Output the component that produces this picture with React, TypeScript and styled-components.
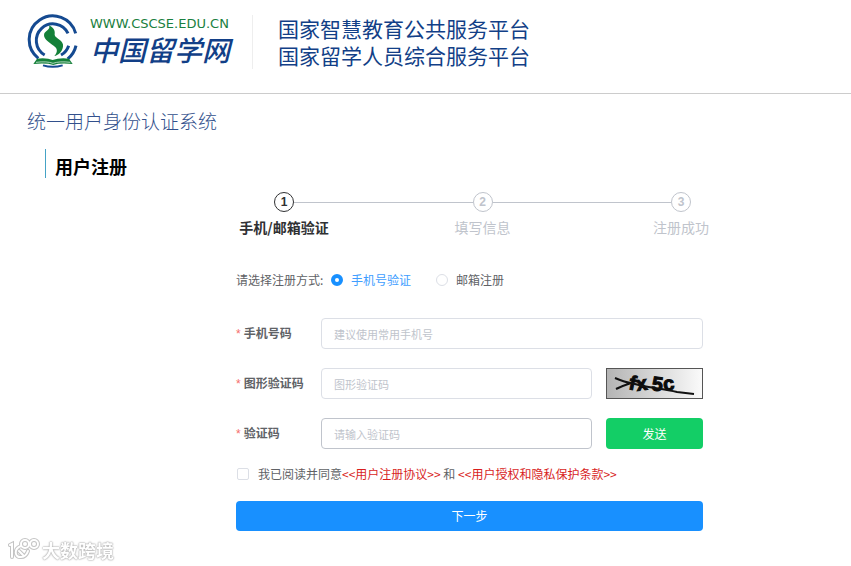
import React, { useState } from "react";
import styled, { createGlobalStyle } from "styled-components";

const GlobalStyle = createGlobalStyle`
  * { box-sizing: border-box; }
  body {
    margin: 0;
    background: #fff;
    color: #606266;
    font-family: "Noto Sans CJK SC", sans-serif;
    font-size: 12px;
    line-height: 20px;
  }
`;

const Header = styled.header`
  display: flex;
  align-items: flex-start;
  padding: 13px 27px 24px;
  border-bottom: 1px solid #ccc;
`;

const Brand = styled.a`
  display: flex;
  gap: 10px;
  color: #123f87;
  text-decoration: none;
`;

const BrandText = styled.span`
  display: flex;
  flex-direction: column;
  padding-top: 3px;
`;

const Domain = styled.span`
  color: #1a8040;
  font: 13px/16px "DejaVu Sans", sans-serif;
`;

const BrandName = styled.span`
  font-size: 28px;
  font-style: italic;
  font-weight: 500;
  line-height: 34px;
`;

const Platforms = styled.div`
  margin: 2px 0 0 22px;
  padding-left: 25px;
  border-left: 1px solid #eee;
  color: #123f87;
  font-size: 21px;
  line-height: 27px;
`;

const SystemName = styled.h1`
  margin: 15px 27px 0;
  color: #32508c;
  font-size: 19px;
  font-weight: 300;
  line-height: 24px;
`;

const PageTitle = styled.h2`
  margin: 16px 45px 0;
  padding: 6px 0 1px 9px;
  border-left: 1px solid #45a3c6;
  color: #000;
  font-size: 18px;
  font-weight: 700;
  line-height: 22px;
`;

const Main = styled.main`
  padding: 14px 122px 30px 236px;
`;

const Steps = styled.ol`
  display: grid;
  grid-template-columns: 96px 1fr 96px 1fr 96px;
  margin: 0;
  padding: 0;
  list-style: none;
`;

const StepItem = styled.li<{ $active?: boolean }>`
  display: flex;
  flex-direction: column;
  align-items: center;
  gap: 5px;
  color: ${(p) => (p.$active ? "#303133" : "#c0c4cc")};
  font-size: 14px;
  font-weight: ${(p) => (p.$active ? 700 : 400)};
  white-space: nowrap;
`;

const StepNumber = styled.span`
  width: 20px;
  height: 20px;
  border: 1px solid currentColor;
  border-radius: 50%;
  font: bold 12px/18px "Liberation Sans", sans-serif;
  text-align: center;
`;

const StepLine = styled.li`
  height: 1px;
  margin: 10px -38px 0;
  background: #c0c4cc;
`;

const Form = styled.form`
  display: flex;
  flex-direction: column;
  margin: 33px 26px 0 0;
`;

const MethodRow = styled.fieldset`
  display: flex;
  align-items: center;
  margin: 0 0 28px;
  padding: 0;
  border: 0;
`;

const MethodCaption = styled.span`
  width: 95px;
`;

const RadioLabel = styled.label<{ $checked: boolean }>`
  display: flex;
  align-items: center;
  gap: 8px;
  margin-right: 25px;
  color: ${(p) => (p.$checked ? "#409eff" : "#606266")};
`;

const Radio = styled.input`
  appearance: none;
  width: 12px;
  height: 12px;
  margin: 0;
  border: 1px solid #dcdfe6;
  border-radius: 50%;
  background: #fff;
  &:checked { border: 4px solid #1890ff; }
`;

const Row = styled.div`
  display: flex;
  align-items: center;
  margin-bottom: 19px;
`;

const FieldLabel = styled.label`
  width: 85px;
  flex: none;
  font-weight: 700;
  &::before {
    content: "*";
    margin-right: 3px;
    color: #f56c6c;
    font-weight: 400;
    font-family: "Liberation Sans", sans-serif;
  }
`;

const TextInput = styled.input<{ $strong?: boolean }>`
  flex: 1;
  min-width: 0;
  height: 31px;
  padding: 0 12px;
  border: 1px solid ${(p) => (p.$strong ? "#c0c4cc" : "#dcdfe6")};
  border-radius: 4px;
  color: #606266;
  font: 11px/20px "Noto Sans CJK SC", sans-serif;
  &::placeholder { color: #c0c4cc; }
`;

const Button = styled.button`
  height: 30px;
  padding: 0;
  border: 0;
  border-radius: 4px;
  background: #1890ff;
  color: #fff;
  font: 12px/20px "Noto Sans CJK SC", sans-serif;
`;

const SendButton = styled(Button)`
  width: 97px;
  height: 31px;
  margin-left: 14px;
  background: #13ce66;
`;

const CaptchaButton = styled.button`
  display: flex;
  width: 97px;
  height: 31px;
  margin-left: 14px;
  padding: 0;
  border: 1px solid #555;
  background: linear-gradient(90deg, #b4b4b4, #fafafa);
`;

const Agreement = styled.div`
  display: flex;
  align-items: center;
  margin: -4px 0 17px;
`;

const Checkbox = styled.input`
  appearance: none;
  width: 12px;
  height: 12px;
  margin: 0 9px 0 1px;
  border: 1px solid #dcdfe6;
  border-radius: 2px;
  background: #fff;
  &:checked { background: #1890ff; border-color: #1890ff; }
`;

const TermsLink = styled.a`
  color: #d81e1e;
  text-decoration: none;
`;

const Watermark = styled.div`
  position: fixed;
  left: 8px;
  bottom: 4px;
  display: flex;
  align-items: center;
  gap: 2px;
  color: #fff;
  font-size: 18px;
  font-weight: 700;
  line-height: 24px;
  text-shadow: 0 0 1px #aaa, 0 0 2px #aaa, 0 0 2px #ccc;
`;

const Emblem = () => (
  <svg width="53" height="56" viewBox="0 0 159 168" aria-hidden="true">
    <g fill="none" stroke="#154a91">
      <path d="M146 61 A71 71 0 1 0 34 136" strokeWidth="9" />
      <path d="M123 61 A50 50 0 1 0 53 126" strokeWidth="9" />
      <path d="M125 98 A50 50 0 0 1 102 126" strokeWidth="9" />
      <path d="M147 98 A71 71 0 0 1 122 138" strokeWidth="9" />
      <path d="M48 157 Q77 166 107 157" strokeWidth="6" />
    </g>
    <path d="M66 37 C85 46 84 59 83 66 C84 76 112 82 108 101 C105 119 93 126 82 129 C92 118 93 107 80 98 C69 90 51 80 51 66 C52 52 72 52 66 37Z" fill="#148039" />
    <path d="M30 137 Q60 134 77 141 Q96 134 126 137 L137 153 Q98 149 79 156 Q58 149 19 153Z" fill="#148039" />
    <path d="M27 148 Q60 144 78 151 Q97 144 130 148" fill="none" stroke="#fff" strokeWidth="2" />
  </svg>
);

const CaptchaDrawing = () => (
  <svg width="95" height="29" viewBox="0 0 95 29" role="img" aria-label="fx5c">
    <g fill="#0b0b0b" stroke="#0b0b0b" strokeWidth="1" fontFamily="Liberation Sans" fontWeight="700" fontSize="20">
      <text x="21" y="20" transform="rotate(12 21 20)">f</text>
      <text x="30" y="22" transform="rotate(-8 30 22)">x</text>
      <text x="44" y="21" transform="rotate(8 44 21)">5</text>
      <text x="57" y="22" transform="rotate(-8 57 22)">c</text>
    </g>
    <path d="M8 9 Q17 13 24 14 Q15 17 9 20 M24 14 C40 19 55 19 70 23 L87 25" fill="none" stroke="#111" strokeWidth="2" />
  </svg>
);

const WatermarkIcon = () => (
  <svg width="32" height="24" viewBox="0 0 32 24" fill="none" aria-hidden="true">
    {[{ color: "#c4c4c4", width: 4 }, { color: "#fff", width: 2 }].map((s) => (
      <g key={s.color} stroke={s.color} strokeWidth={s.width} strokeLinecap="round">
        <path d="M2 7 L4 6 V19" />
        <path d="M13 8 C5 11 7 20 13 19 C17 19 19 16 20 13 M11 13 L15 17" />
        <ellipse cx="17" cy="6" rx="4" ry="4" />
        <ellipse cx="26" cy="6" rx="4" ry="4" />
      </g>
    ))}
  </svg>
);

export default function App() {
  const [method, setMethod] = useState("phone");
  return (
    <>
      <GlobalStyle />
      <Header>
        <Brand href="#">
          <Emblem />
          <BrandText>
            <Domain>WWW.CSCSE.EDU.CN</Domain>
            <BrandName>中国留学网</BrandName>
          </BrandText>
        </Brand>
        <Platforms>
          <div>国家智慧教育公共服务平台</div>
          <div>国家留学人员综合服务平台</div>
        </Platforms>
      </Header>
      <SystemName>统一用户身份认证系统</SystemName>
      <PageTitle>用户注册</PageTitle>
      <Main>
        <Steps>
          <StepItem $active aria-current="step">
            <StepNumber>1</StepNumber>手机/邮箱验证
          </StepItem>
          <StepLine aria-hidden="true" />
          <StepItem>
            <StepNumber>2</StepNumber>填写信息
          </StepItem>
          <StepLine aria-hidden="true" />
          <StepItem>
            <StepNumber>3</StepNumber>注册成功
          </StepItem>
        </Steps>
        <Form onSubmit={(e) => e.preventDefault()}>
          <MethodRow aria-labelledby="method-caption">
            <MethodCaption id="method-caption">请选择注册方式:</MethodCaption>
            <RadioLabel $checked={method === "phone"}>
              <Radio type="radio" name="method" checked={method === "phone"} onChange={() => setMethod("phone")} />
              手机号验证
            </RadioLabel>
            <RadioLabel $checked={method === "email"}>
              <Radio type="radio" name="method" checked={method === "email"} onChange={() => setMethod("email")} />
              邮箱注册
            </RadioLabel>
          </MethodRow>
          <Row>
            <FieldLabel htmlFor="phone">手机号码</FieldLabel>
            <TextInput id="phone" type="tel" placeholder="建议使用常用手机号" />
          </Row>
          <Row>
            <FieldLabel htmlFor="captcha">图形验证码</FieldLabel>
            <TextInput id="captcha" placeholder="图形验证码" />
            <CaptchaButton type="button">
              <CaptchaDrawing />
            </CaptchaButton>
          </Row>
          <Row>
            <FieldLabel htmlFor="code">验证码</FieldLabel>
            <TextInput id="code" $strong placeholder="请输入验证码" />
            <SendButton type="button">发送</SendButton>
          </Row>
          <Agreement>
            <Checkbox id="agree" type="checkbox" />
            <span>
              <label htmlFor="agree">我已阅读并同意</label>
              <TermsLink href="#terms">&lt;&lt;用户注册协议&gt;&gt;</TermsLink> 和{" "}
              <TermsLink href="#privacy">&lt;&lt;用户授权和隐私保护条款&gt;&gt;</TermsLink>
            </span>
          </Agreement>
          <Button type="submit">下一步</Button>
        </Form>
      </Main>
      <Watermark>
        <WatermarkIcon />
        <span>大数跨境</span>
      </Watermark>
    </>
  );
}
